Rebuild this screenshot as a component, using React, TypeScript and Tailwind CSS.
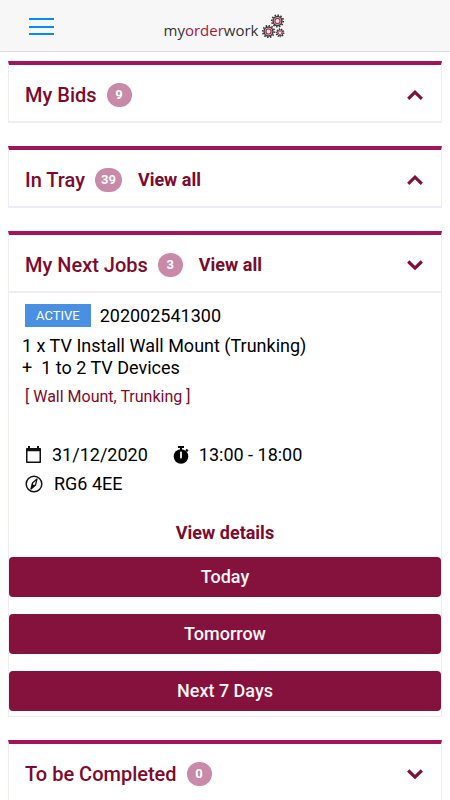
import React, { useState } from 'react';
import { clsx } from 'clsx';

interface SectionProps {
  title: string;
  count: number;
  viewAll?: boolean;
  open?: boolean;
  chevron: 'up' | 'down';
  children?: React.ReactNode;
}

interface GearProps {
  cx: number;
  cy: number;
  r: number;
  teeth: number;
}

function Gear({ cx, cy, r, teeth }: GearProps) {
  return (
    <g fill="none">
      <circle cx={cx} cy={cy} r={r - 0.7} stroke="#333" strokeWidth={1.6} pathLength={teeth * 2} strokeDasharray="1 1" />
      <circle cx={cx} cy={cy} r={r * 0.68} stroke="#3a3a3a" strokeWidth={r * 0.22} />
      <circle cx={cx} cy={cy} r={r * 0.4} stroke="#c2224f" strokeWidth={r * 0.2} />
    </g>
  );
}

function Logo() {
  return (
    <a href="#home" className="flex items-center font-['Open_Sans',sans-serif] text-[15px] leading-6 text-[#333]">
      <span className="pt-2">
        my<span className="text-[#a5173f]">order</span>work
      </span>
      <svg width="28" height="28" viewBox="0 0 28 28" aria-hidden="true">
        <Gear cx={19.5} cy={9} r={6.5} teeth={12} />
        <Gear cx={10.5} cy={19.5} r={6.5} teeth={12} />
        <Gear cx={22} cy={20.8} r={4.4} teeth={10} />
      </svg>
    </a>
  );
}

function Chevron({ direction }: { direction: 'up' | 'down' }) {
  return (
    <svg width="18" height="18" viewBox="0 0 18 18" fill="none" stroke="#80103a" strokeWidth="3.2" aria-hidden="true">
      <path d={direction === 'up' ? 'M2.2 12.8 9 6.2l6.8 6.6' : 'M2.2 5.5 9 12.1l6.8-6.6'} />
    </svg>
  );
}

function Section({ title, count, viewAll, open, chevron, children }: SectionProps) {
  const [expanded, setExpanded] = useState(!!open);

  return (
    <section className="border-x border-t-4 border-x-[#ededf9] border-t-[#a4145a] bg-white">
      <div className="flex h-[58px] items-center border-b-2 border-[#ededf9] pt-1 pr-[17px] pl-4">
        <h2 className="text-xl font-medium text-[#7d0a2c]">{title}</h2>
        <span className="ml-[10px] flex h-6 min-w-[25px] items-center justify-center rounded-full bg-[#c88aa8] px-1.5 text-[13px] font-bold text-white">
          {count}
        </span>
        {viewAll && (
          <a href="#all" className="ml-4 text-lg font-bold text-[#7d0a2c]">
            View all
          </a>
        )}
        <button
          type="button"
          aria-label={`Toggle ${title}`}
          aria-expanded={expanded}
          onClick={() => setExpanded(!expanded)}
          className="ml-auto"
        >
          <Chevron direction={chevron} />
        </button>
      </div>
      {expanded && children}
    </section>
  );
}

function CalendarIcon() {
  return (
    <svg width="18" height="20" viewBox="0 0 18 20" fill="#111" aria-hidden="true">
      <path fillRule="evenodd" d="M3 1h2v2h7V1h2v2h1.2a.8.8 0 0 1 .8.8v13.4a.8.8 0 0 1-.8.8H1.8a.8.8 0 0 1-.8-.8V3.8a.8.8 0 0 1 .8-.8H3zM2.500 6.200v10.300h12V6.200z" />
    </svg>
  );
}

function StopwatchIcon() {
  return (
    <svg width="18" height="20" viewBox="0 0 18 20" aria-hidden="true">
      <path d="M6 1h6v2h-2v2H8V3H6z" fill="#000" />
      <path d="m14 4.5 1.8 1.8" stroke="#000" strokeWidth="2" />
      <circle cx="9" cy="11.5" r="7.3" fill="#000" />
      <path d="M9 7.5v5" stroke="#fff" strokeWidth="1.8" strokeLinecap="round" />
    </svg>
  );
}

function CompassIcon() {
  return (
    <svg width="18" height="18" viewBox="0 0 18 18" fill="none" stroke="#111" aria-hidden="true">
      <circle cx="9" cy="9" r="7.8" strokeWidth="1.5" />
      <path d="m12 4-1.5 6L6 14l1.5-6z" strokeWidth="1.2" strokeLinejoin="round" />
      <path d="m7.5 8 3 2L6 14z" fill="#111" strokeWidth="0.5" />
      <circle cx="9" cy="9" r="1" fill="#fff" stroke="none" />
    </svg>
  );
}

const ranges = ['Today', 'Tomorrow', 'Next 7 Days'];

function JobCard() {
  const [range, setRange] = useState('');

  return (
    <div className="border-b border-[#ededf9] pb-[5px]">
      <div className="flex items-center gap-[9px] px-4 pt-[11px]">
        <span className="flex h-[23px] items-center bg-[#4a90e2] px-[11px] text-[13px] text-white">ACTIVE</span>
        <span className="text-lg leading-[22px] text-black">202002541300</span>
      </div>
      <div className="px-[13px] pt-2 text-lg leading-[22px] text-black">
        <p>1 x TV Install Wall Mount (Trunking)</p>
        <p className="whitespace-pre">+  1 to 2 TV Devices</p>
      </div>
      <p className="px-4 pt-[7px] text-base leading-[22px] text-[#7d0a2c]">[ Wall Mount, Trunking ]</p>

      <div className="flex items-center px-4 pt-[34px] text-lg leading-[26px] text-black">
        <CalendarIcon />
        <span className="ml-[9px]">31/12/2020</span>
        <span className="ml-6 flex items-center gap-[9px]">
          <StopwatchIcon />
          13:00 - 18:00
        </span>
      </div>
      <div className="flex items-center gap-[11px] px-4 pt-1 text-lg leading-6 text-black">
        <CompassIcon />
        <span>RG6 4EE</span>
      </div>

      <div className="pt-[23px] text-center leading-6">
        <a href="#details" className="text-lg font-bold text-[#7d0a2c]">
          View details
        </a>
      </div>
      <div className="flex flex-col gap-[17px] pt-[10px]">
        {ranges.map((label) => (
          <button
            key={label}
            type="button"
            aria-pressed={range === label}
            onClick={() => setRange(label)}
            className={clsx('h-10 w-full rounded bg-[#84123d] text-lg font-medium text-[#fff5f5]', range === label && 'ring-2 ring-[#c88aa8]')}
          >
            {label}
          </button>
        ))}
      </div>
    </div>
  );
}

export default function App() {
  return (
    <div className="h-screen overflow-hidden bg-white font-[Roboto,sans-serif]">
      <header className="grid h-[52px] grid-cols-[1fr_auto_1fr] items-center border-b border-[#dcdcdc] bg-[#f7f7f7] px-7">
        <button type="button" aria-label="Menu" className="justify-self-start">
          <svg width="26" height="20" viewBox="0 0 26 20" fill="#058bfa" aria-hidden="true">
            <path d="M1 2h25v2H1zM1 10h25v2H1zM1 17h25v2H1z" />
          </svg>
        </button>
        <Logo />
      </header>

      <main className="flex flex-col gap-[23px] px-2 pt-[9px]">
        <Section title="My Bids" count={9} chevron="up" />
        <Section title="In Tray" count={39} viewAll chevron="up" />
        <Section title="My Next Jobs" count={3} viewAll open chevron="down">
          <JobCard />
        </Section>
        <Section title="To be Completed" count={0} chevron="down" />
      </main>
    </div>
  );
}
